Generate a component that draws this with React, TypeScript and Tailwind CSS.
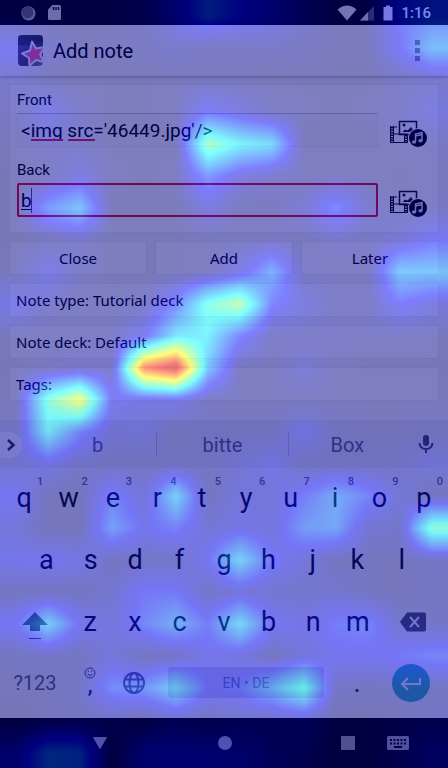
import { useLayoutEffect, useRef, type ReactNode } from "react";

// Attention intensity in percent, one value per 32px cell, 14 columns by 24 rows.
const HEAT: number[][] = [
  [1, 0, 1, 1, 2, 9, 18, 13, 9, 4, 0, 1, 14, 16],
  [11, 4, 1, 1, 2, 4, 2, 2, 3, 2, 1, 1, 12, 26],
  [4, 1, 0, 0, 0, 1, 1, 1, 0, 0, 0, 0, 2, 4],
  [2, 9, 3, 0, 0, 1, 12, 7, 2, 1, 0, 1, 3, 7],
  [1, 3, 2, 0, 0, 0, 48, 36, 31, 0, 0, 0, 1, 2],
  [0, 1, 7, 1, 0, 1, 18, 7, 3, 1, 1, 1, 0, 1],
  [0, 19, 27, 0, 0, 0, 7, 1, 1, 5, 16, 4, 1, 2],
  [0, 1, 3, 0, 0, 0, 1, 1, 2, 1, 3, 2, 6, 12],
  [1, 9, 2, 0, 0, 0, 1, 8, 23, 2, 1, 1, 28, 27],
  [9, 3, 1, 1, 2, 15, 41, 52, 14, 7, 2, 2, 12, 7],
  [1, 1, 1, 2, 10, 33, 35, 14, 2, 2, 2, 2, 2, 1],
  [0, 2, 3, 3, 83, 97, 27, 1, 1, 5, 1, 0, 0, 0],
  [1, 42, 62, 11, 8, 9, 2, 1, 1, 1, 1, 1, 1, 1],
  [3, 34, 16, 5, 6, 1, 2, 2, 2, 9, 2, 1, 1, 2],
  [4, 9, 3, 2, 2, 2, 2, 5, 9, 2, 2, 2, 3, 6],
  [12, 1, 1, 15, 6, 31, 2, 7, 7, 14, 23, 16, 6, 2],
  [7, 1, 1, 21, 11, 15, 6, 9, 7, 20, 22, 5, 4, 44],
  [10, 11, 9, 2, 3, 3, 12, 31, 13, 7, 2, 2, 1, 3],
  [2, 2, 2, 5, 13, 13, 3, 7, 5, 4, 5, 2, 1, 2],
  [12, 30, 11, 7, 16, 24, 14, 32, 12, 9, 14, 16, 4, 3],
  [2, 3, 2, 7, 2, 3, 10, 8, 2, 7, 11, 11, 13, 16],
  [1, 1, 3, 17, 19, 30, 12, 14, 25, 40, 3, 2, 3, 2],
  [0, 1, 2, 2, 0, 4, 2, 4, 3, 5, 0, 0, 1, 3],
  [8, 20, 19, 0, 9, 10, 9, 8, 5, 3, 0, 0, 3, 6],
];

const ramp = (v: number) => Math.round(255 * Math.min(1, Math.max(0, v)));

function HeatOverlay() {
  const ref = useRef<HTMLCanvasElement>(null);
  useLayoutEffect(() => {
    const canvas = ref.current;
    const ctx = canvas?.getContext("2d");
    if (!canvas || !ctx) return;
    const { width, height } = canvas;
    const image = ctx.createImageData(width, height);
    const rows = HEAT.length;
    const cols = HEAT[0].length;
    for (let y = 0; y < height; y++) {
      const gy = Math.min(rows - 1, Math.max(0, ((y + 0.5) * rows) / height - 0.5));
      const y0 = Math.floor(gy);
      const y1 = Math.min(rows - 1, y0 + 1);
      const fy = gy - y0;
      for (let x = 0; x < width; x++) {
        const gx = Math.min(cols - 1, Math.max(0, ((x + 0.5) * cols) / width - 0.5));
        const x0 = Math.floor(gx);
        const x1 = Math.min(cols - 1, x0 + 1);
        const fx = gx - x0;
        const top = HEAT[y0][x0] * (1 - fx) + HEAT[y0][x1] * fx;
        const bottom = HEAT[y1][x0] * (1 - fx) + HEAT[y1][x1] * fx;
        const v = (top * (1 - fy) + bottom * fy) / 25;
        const i = (y * width + x) * 4;
        image.data[i] = ramp(1.5 - Math.abs(v - 3));
        image.data[i + 1] = ramp(1.5 - Math.abs(v - 2));
        image.data[i + 2] = ramp(1.5 - Math.abs(v - 1));
        image.data[i + 3] = 255;
      }
    }
    ctx.putImageData(image, 0, 0);
  }, []);
  return (
    <canvas
      ref={ref}
      width={448}
      height={768}
      aria-hidden="true"
      className="pointer-events-none absolute inset-0 h-full w-full opacity-50"
    />
  );
}

function StatusBar() {
  return (
    <div className="flex h-[25px] items-center bg-black pr-[17px] pl-5 text-white">
      <svg width="16" height="16" viewBox="0 0 16 16" aria-hidden="true">
        <circle cx="8.500" cy="8.500" r="7" fill="#bbb" />
        <circle cx="7.500" cy="7.500" r="6" fill="#666" stroke="#999" strokeDasharray="1 1" />
      </svg>
      <svg className="ml-3" width="13" height="16" viewBox="0 0 13 16" aria-hidden="true">
        <path d="M4.500 0H11.500Q13 0 13 1.500V13.500Q13 15 11.500 15H1.500Q0 15 0 13.500V4.500Z" fill="#d8d8d8" />
        <path d="M5.500 2V5M8 2V5M10.500 2V5" stroke="#111" strokeWidth="1.500" />
      </svg>
      <div className="ml-auto flex items-center">
        <svg width="20" height="16" viewBox="0 0 20 16" aria-hidden="true">
          <path d="M0.500 4.500Q10-3.500 19.500 4.500L10 15.500Z" fill="#e8e8e8" />
        </svg>
        <svg className="ml-0.5" width="16" height="16" viewBox="0 0 16 16" aria-hidden="true">
          <path d="M15 1V15.500H1Z" fill="#555" />
          <path d="M9 7V15.500H1Z" fill="#ddd" />
        </svg>
        <svg className="ml-2" width="10" height="16" viewBox="0 0 10 16" aria-hidden="true">
          <path d="M3 0.500H7V2H9.500V15.500H0.500V2H3Z" fill="#eee" />
        </svg>
        <span className="ml-2 text-[15px] leading-5 font-medium text-[#eee]">1:16</span>
      </div>
    </div>
  );
}

function AnkiLogo() {
  return (
    <svg width="27" height="32" viewBox="0 0 27 32" aria-hidden="true">
      <defs>
        <linearGradient id="tile" x1="0" y1="0" x2="1" y2="1">
          <stop offset="0" stopColor="#666" />
          <stop offset="0.600" stopColor="#444" />
          <stop offset="1" stopColor="#888" />
        </linearGradient>
        <clipPath id="tileClip">
          <rect width="26" height="32" rx="4" />
        </clipPath>
      </defs>
      <rect width="25" height="31" rx="4" fill="url(#tile)" />
      <path d="M0 10Q12 12 25 7V4Q25 0 21 0H4Q0 0 0 4Z" fill="#222" opacity="0.600" />
      <g clipPath="url(#tileClip)">
        <path
          d="M14 6.500L18 13.500L27 12L22 19.500L26 27L18 25L11.500 31L11 23L4 18.500L12 15.500Z"
          fill="#f8607a"
          stroke="#f4f4f4"
          strokeWidth="2"
          strokeLinejoin="round"
        />
      </g>
    </svg>
  );
}

function MediaButton({ label }: { label: string }) {
  return (
    <button type="button" aria-label={label} className="ml-[11px] h-[34px] w-[39px] shrink-0">
      <svg className="mt-1" width="39" height="30" viewBox="0 0 39 30" aria-hidden="true" fill="none" stroke="#111">
        <path d="M1.500 9V26M4.500 9V26M1 25.500H19M1 10H8M5 17H18M15.500 17V26M18.500 17V26" strokeWidth="1" />
        <path d="M3 10V26M17 18V26" strokeWidth="2.500" strokeDasharray="1.500 1" />
        <rect x="10.500" y="4.500" width="17" height="13" strokeWidth="1.500" />
        <circle cx="15" cy="8" r="1.500" fill="#111" stroke="none" />
        <path d="M13.500 15L16 12.500L18.500 13.500L22 10L25.500 15Z" fill="#111" stroke="none" />
        <circle cx="29" cy="21" r="10" fill="#fdfdfd" stroke="none" />
        <circle cx="29" cy="21" r="9" fill="#000" stroke="none" />
        <path d="M26.500 25V17L33 15.500V23.500M26.500 19L33 17.500" stroke="#ddd" strokeWidth="1.500" />
        <ellipse cx="25" cy="25" rx="2.200" ry="1.800" fill="#ddd" stroke="none" />
        <ellipse cx="31.500" cy="23.700" rx="2.200" ry="1.800" fill="#ddd" stroke="none" />
      </svg>
    </button>
  );
}

const fieldText = "block h-[34px] w-full text-[19px] text-black outline-none";

function NoteFields() {
  return (
    <section className="h-[149px] border border-[#e8e8e8] bg-[#fdfdfd] pr-2.5 pl-[7px] font-[Roboto,sans-serif]">
      <label htmlFor="front" className="block pt-[5px] text-[15px] leading-5 text-black">
        Front
      </label>
      <div className="mt-[3px] flex">
        <div className="relative flex-1">
          <input
            id="front"
            defaultValue="<img src='46449.jpg'/>"
            spellCheck={false}
            className={`${fieldText} border border-[#eee] border-t-[#c4c4c4] bg-[#f9f9f9] px-[3px]`}
          />
          <span className="absolute top-[26px] left-3.5 h-0.5 w-8 bg-[#e02850]" />
          <span className="absolute top-[26px] left-[51px] h-0.5 w-[27px] bg-[#e02850]" />
        </div>
        <MediaButton label="Attach media to front" />
      </div>
      <label htmlFor="back" className="block pt-[13px] text-[15px] leading-5 text-black">
        Back
      </label>
      <div className="mt-[3px] flex">
        <div className="relative flex-1">
          <input
            id="back"
            defaultValue="b"
            spellCheck={false}
            className={`${fieldText} rounded-xs border-2 border-[#e01020] bg-[#f9f9f9] px-0.5`}
          />
          <span className="absolute top-[26px] left-1 h-px w-2.5 bg-black" />
          <span className="absolute top-[5px] left-3.5 h-[25px] w-px bg-[#555]" />
        </div>
        <MediaButton label="Attach media to back" />
      </div>
    </section>
  );
}

const box = "h-[34px] border border-[#e8e8e8] bg-[#fdfdfd] text-[15px] leading-5 text-black";

function Key({ label, hint }: { label: string; hint?: string }) {
  return (
    <button type="button" className="relative h-[62px] flex-1 pb-0.5 text-[27px] leading-8 text-[#0c0e12]">
      {label}
      {hint && (
        <span className="absolute top-1.5 left-[35px] text-[11px] leading-4 font-medium text-[#646a76]">{hint}</span>
      )}
    </button>
  );
}

function Suggestion({ children }: { children: ReactNode }) {
  return (
    <button type="button" className="h-6 flex-1 text-[20px] leading-6 text-[#5c6474]">
      {children}
    </button>
  );
}

function Keyboard() {
  return (
    <div className="bg-[#eaecef] font-[Roboto,sans-serif]">
      <div className="flex h-12 items-center bg-[#e0e3e7] pt-0.5">
        <button
          type="button"
          aria-label="Expand toolbar"
          className="flex h-[26px] w-[22px] items-center justify-center rounded-r-full bg-[#f4f5f6]"
        >
          <svg width="10" height="14" viewBox="0 0 10 14" fill="none" stroke="#30343c" strokeWidth="2.500" aria-hidden="true">
            <path d="M2 2L7.500 7L2 12" />
          </svg>
        </button>
        <div className="ml-[17px] flex flex-1">
          <div className="flex flex-[9] border-r border-[#b6bdc8]"><Suggestion>b</Suggestion></div>
          <div className="flex flex-[10] border-r border-[#b6bdc8]"><Suggestion>bitte</Suggestion></div>
          <div className="flex flex-[9]"><Suggestion>Box</Suggestion></div>
        </div>
        <button type="button" aria-label="Voice input" className="mr-3.5 ml-3 h-6 w-4">
          <svg width="16" height="24" viewBox="0 0 16 24" fill="none" stroke="#404858" strokeWidth="2" aria-hidden="true">
            <rect x="5" y="2" width="6" height="11" rx="3" fill="#404858" stroke="none" />
            <path d="M1.500 10Q2 16 8 16T14.500 10M8 16V20" />
          </svg>
        </button>
      </div>
      <div className="flex px-0.5">
        {[..."qwertyuiop"].map((c, i) => (
          <Key key={c} label={c} hint={String((i + 1) % 10)} />
        ))}
      </div>
      <div className="flex px-6">
        {[..."asdfghjkl"].map((c) => (
          <Key key={c} label={c} />
        ))}
      </div>
      <div className="flex px-0.5">
        <button type="button" aria-label="Shift" className="flex h-[62px] w-[66px] items-center justify-center">
          <svg width="28" height="32" viewBox="0 0 28 32" aria-hidden="true">
            <path d="M14 5L27 18H19V24H9V18H1Z" fill="#4c5464" />
            <path d="M8 31.500H20" stroke="#4c5464" />
          </svg>
        </button>
        {[..."zxcvbnm"].map((c) => (
          <Key key={c} label={c} />
        ))}
        <button type="button" aria-label="Delete" className="flex h-[62px] w-[66px] items-center justify-center pb-0.5">
          <svg width="28" height="20" viewBox="0 0 28 20" aria-hidden="true">
            <path d="M8 0.500H25Q27 0.500 27 2.500V17.500Q27 19.500 25 19.500H8L1 10Z" fill="#4c5464" />
            <path d="M11 5L20 15M20 5L11 15" stroke="#eaecef" strokeWidth="2" />
          </svg>
        </button>
      </div>
      <div className="flex h-16 items-start px-0.5">
        <button type="button" className="h-[58px] w-[66px] text-[20px] leading-6 text-[#5c6474]">?123</button>
        <button type="button" className="flex h-[58px] w-11 flex-col items-center pt-[13px] text-[#20242c]">
          <svg width="12" height="12" viewBox="0 0 12 12" fill="none" stroke="#4c5566" aria-hidden="true">
            <circle cx="6" cy="6" r="5" />
            <path d="M3.500 7Q6 10 8.500 7M4.300 3.500V5M7.700 3.500V5" />
          </svg>
          <span className="text-[24px] leading-3">,</span>
        </button>
        <button type="button" aria-label="Change language" className="flex h-[58px] w-11 items-center justify-center">
          <svg width="24" height="24" viewBox="0 0 24 24" fill="none" stroke="#5c6474" strokeWidth="2" aria-hidden="true">
            <circle cx="12" cy="12" r="10" />
            <ellipse cx="12" cy="12" rx="4.500" ry="10" />
            <path d="M3 8.500H21M3 15.500H21" />
          </svg>
        </button>
        <button
          type="button"
          className="mt-[13px] ml-3 h-[31px] flex-1 rounded-sm bg-[#c8ccd3] text-[14px] leading-5 text-[#747c8a]"
        >
          EN • DE
        </button>
        <button type="button" className="h-[58px] w-[66px] text-[27px] leading-8 text-[#20242c]">.</button>
        <button
          type="button"
          aria-label="Enter"
          className="mt-2.5 mr-4 ml-0.5 flex h-[38px] w-[38px] items-center justify-center rounded-full bg-[#3ab0b4]"
        >
          <svg width="22" height="16" viewBox="0 0 22 16" fill="none" stroke="#e8eef2" strokeWidth="2" aria-hidden="true">
            <path d="M20 3V9H2M8 3L2 9L8 15" />
          </svg>
        </button>
      </div>
    </div>
  );
}

function NavigationBar() {
  return (
    <nav className="flex h-[50px] items-center bg-black pr-[39px] pl-[92px]">
      <button type="button" aria-label="Hide keyboard" className="h-4 w-4">
        <svg width="16" height="16" viewBox="0 0 16 16" aria-hidden="true">
          <path d="M1.500 2.500H14.500L8 13.500Z" fill="#a0a0a0" stroke="#a0a0a0" strokeLinejoin="round" />
        </svg>
      </button>
      <button type="button" aria-label="Home" className="mx-auto h-3.5 w-3.5 rounded-full bg-[#a0a0a0]" />
      <button type="button" aria-label="Recent apps" className="h-3.5 w-3.5 bg-[#a0a0a0]" />
      <button type="button" aria-label="Switch keyboard" className="ml-8 h-4 w-[22px]">
        <svg width="22" height="16" viewBox="0 0 22 16" aria-hidden="true">
          <rect y="1" width="22" height="14" rx="1.500" fill="#a0a0a0" />
          <path d="M3 5H19M3 8.500H19" stroke="#000" strokeWidth="2" strokeDasharray="2 1.500" />
          <path d="M7 12H15" stroke="#000" strokeWidth="2" />
        </svg>
      </button>
    </nav>
  );
}

export default function App() {
  return (
    <div className="relative flex min-h-screen flex-col bg-[#f1f1f1] font-[Roboto,sans-serif]">
      <StatusBar />
      <header className="flex h-[51px] items-center bg-[#f6f6f6] pr-7 pl-[18px] shadow-[0_1px_3px_rgba(0,0,0,0.300)]">
        <AnkiLogo />
        <h1 className="ml-2 text-[20px] leading-6 text-black">Add note</h1>
        <button type="button" aria-label="More options" className="ml-auto flex flex-col gap-[3px]">
          <span className="h-[5px] w-[5px] bg-[#888]" />
          <span className="h-[5px] w-[5px] bg-[#888]" />
          <span className="h-[5px] w-[5px] bg-[#888]" />
        </button>
      </header>
      <main className="flex flex-1 flex-col gap-2 px-[9px] pt-2 pb-[19px] font-['Noto_Sans',sans-serif]">
        <NoteFields />
        <div className="grid grid-cols-3 gap-2">
          <button type="button" className={box}>Close</button>
          <button type="button" className={box}>Add</button>
          <button type="button" className={box}>Later</button>
        </div>
        <button type="button" className={`${box} px-1.5 text-left`}>Note type: Tutorial deck</button>
        <button type="button" className={`${box} px-1.5 text-left`}>Note deck: Default</button>
        <button type="button" className={`${box} px-1.5 text-left`}>Tags:</button>
      </main>
      <Keyboard />
      <NavigationBar />
      <HeatOverlay />
    </div>
  );
}
